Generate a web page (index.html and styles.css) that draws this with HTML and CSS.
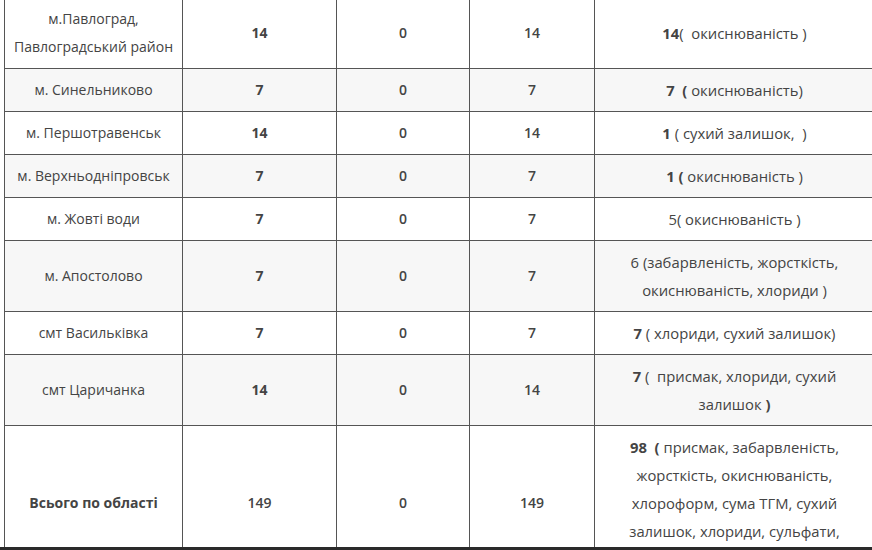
FILE: index.html
```html
<!DOCTYPE html>
<html lang="uk">
<head>
<meta charset="utf-8">
<link rel="stylesheet" href="styles.css">
</head>
<body>
<div class="wrap">
<table class="tbl">
  <colgroup>
    <col class="c1"><col class="c2"><col class="c3"><col class="c4"><col class="c5">
  </colgroup>
  <tbody>
    <tr><td>м.Павлоград, Павлоградський район</td><td><b>14</b></td><td class="num">0</td><td class="num">14</td><td class="desc"><b>14</b>(&nbsp; окиснюваність )</td></tr>
    <tr><td>м. Синельниково</td><td><b>7</b></td><td class="num">0</td><td class="num">7</td><td class="desc"><b>7&nbsp; (</b> окиснюваність)</td></tr>
    <tr><td>м. Першотравенськ</td><td><b>14</b></td><td class="num">0</td><td class="num">14</td><td class="desc"><b>1</b> ( сухий залишок,&nbsp; )</td></tr>
    <tr><td>м. Верхньодніпровськ</td><td><b>7</b></td><td class="num">0</td><td class="num">7</td><td class="desc"><b>1 (</b> окиснюваність )</td></tr>
    <tr><td>м. Жовті води</td><td><b>7</b></td><td class="num">0</td><td class="num">7</td><td class="desc">5( окиснюваність )</td></tr>
    <tr><td>м. Апостолово</td><td><b>7</b></td><td class="num">0</td><td class="num">7</td><td class="desc">6 (забарвленість, жорсткість, окиснюваність, хлориди )</td></tr>
    <tr><td>смт Васильківка</td><td><b>7</b></td><td class="num">0</td><td class="num">7</td><td class="desc"><b>7</b> ( хлориди, сухий залишок)</td></tr>
    <tr><td>смт Царичанка</td><td><b>14</b></td><td class="num">0</td><td class="num">14</td><td class="desc"><b>7</b> (&nbsp; присмак, хлориди, сухий залишок <b>)</b></td></tr>
    <tr><td><b>Всього по області</b></td><td class="num">149</td><td class="num">0</td><td class="num">149</td><td class="desc"><b>98&nbsp; (</b> присмак, забарвленість, жорсткість, окиснюваність, хлороформ, сума ТГМ, сухий залишок, хлориди, сульфати, нітрати )</td></tr>
  </tbody>
</table>
</div>
<div class="bottombar"></div>
</body>
</html>
```

FILE: styles.css
```css
html, body {
  margin: 0;
  padding: 0;
  background: #fff;
  overflow: hidden;
}
.wrap {
  padding-left: 4px;
  margin-top: -3px;
}
.tbl {
  border-collapse: collapse;
  table-layout: fixed;
  width: 870px;
  font-family: "Open Sans", "Liberation Sans", sans-serif;
  font-size: 14px;
  line-height: 28px;
  color: #444;
}
.c1 { width: 178px; }
.c2 { width: 154px; }
.c3 { width: 133px; }
.c4 { width: 125px; }
.c5 { width: 280px; }
.tbl td {
  border: 1px solid #555;
  padding: 7px 6px;
  text-align: center;
  vertical-align: middle;
}
.tbl td.num {
  font-weight: 600;
}
.tbl td.desc {
  font-size: 14.8px;
  padding: 7px 10px;
}
.tbl tr:nth-child(even) td {
  background: #f7f7f7;
}
.tbl b {
  font-weight: 700;
}
.bottombar {
  position: fixed;
  left: 0;
  right: 0;
  bottom: 0;
  height: 3px;
  background: #2a2a2a;
}
```
